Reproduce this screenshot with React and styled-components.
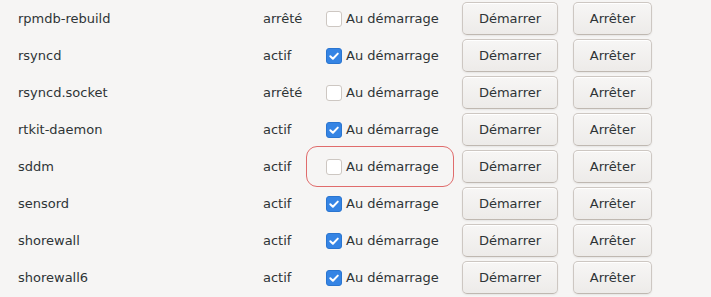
import React from 'react';
import styled, { createGlobalStyle } from 'styled-components';

const GlobalStyle = createGlobalStyle`
  html, body {
    margin: 0;
    padding: 0;
    background: #f6f5f4;
  }
  body {
    font-family: "DejaVu Sans", "Liberation Sans", sans-serif;
    font-size: 13px;
    color: #2e3436;
  }
`;

const services = [
  { name: 'rpmdb-rebuild', state: 'arrêté', boot: false },
  { name: 'rsyncd', state: 'actif', boot: true },
  { name: 'rsyncd.socket', state: 'arrêté', boot: false },
  { name: 'rtkit-daemon', state: 'actif', boot: true },
  { name: 'sddm', state: 'actif', boot: false, highlight: true },
  { name: 'sensord', state: 'actif', boot: true },
  { name: 'shorewall', state: 'actif', boot: true },
  { name: 'shorewall6', state: 'actif', boot: true },
];

const List = styled.div`
  display: flex;
  flex-direction: column;
  gap: 4px;
  padding: 2px 0 0 18px;
  width: 711px;
  height: 297px;
  box-sizing: border-box;
  overflow: hidden;
`;

const Row = styled.div`
  display: flex;
  align-items: center;
  height: 33px;
  flex-shrink: 0;
`;

const Name = styled.span`
  width: 245px;
  white-space: nowrap;
`;

const State = styled.span`
  width: 43px;
  white-space: nowrap;
`;

const BootToggle = styled.label`
  position: relative;
  display: flex;
  align-items: center;
  gap: 4px;
  width: 148px;
  height: 33px;
  padding-left: 20px;
  box-sizing: border-box;
  white-space: nowrap;

  &::before {
    content: '';
    display: ${(p) => (p.$highlight ? 'block' : 'none')};
    position: absolute;
    left: 0;
    right: 0;
    top: -4px;
    bottom: -4px;
    border: 1px solid #e06c6c;
    border-radius: 11px;
    pointer-events: none;
  }
`;

const Box = styled.span`
  display: inline-flex;
  align-items: center;
  justify-content: center;
  width: 16px;
  height: 16px;
  box-sizing: border-box;
  border-radius: 3px;
  border: 1px solid ${(p) => (p.$checked ? '#2a75d0' : '#cdc7c2')};
  background: ${(p) => (p.$checked ? '#3584e4' : '#ffffff')};
`;

const Actions = styled.div`
  display: flex;
  gap: 15px;
  margin-left: 8px;
`;

const Button = styled.button`
  width: ${(p) => p.$width}px;
  height: 33px;
  padding: 0;
  font-family: inherit;
  font-size: 13px;
  color: #2e3436;
  background: linear-gradient(to bottom, #f7f6f5, #edebe9);
  border: 1px solid #cdc7c2;
  border-bottom-color: #bfb8b1;
  border-radius: 5px;
  box-shadow: inset 0 1px #ffffff, 0 1px 2px rgba(0, 0, 0, 0.07);
`;

const Check = () => (
  <svg width="12" height="12" viewBox="0 0 12 12">
    <path
      d="M2.3 6.2 L4.9 8.7 L9.8 3.6"
      fill="none"
      stroke="#ffffff"
      strokeWidth="2"
      strokeLinecap="round"
      strokeLinejoin="round"
    />
  </svg>
);

export default function App() {
  return (
    <>
      <GlobalStyle />
      <List>
        {services.map((s) => (
          <Row key={s.name}>
            <Name>{s.name}</Name>
            <State>{s.state}</State>
            <BootToggle $highlight={s.highlight}>
              <Box $checked={s.boot}>{s.boot && <Check />}</Box>
              Au démarrage
            </BootToggle>
            <Actions>
              <Button $width={96}>Démarrer</Button>
              <Button $width={79}>Arrêter</Button>
            </Actions>
          </Row>
        ))}
      </List>
    </>
  );
}
